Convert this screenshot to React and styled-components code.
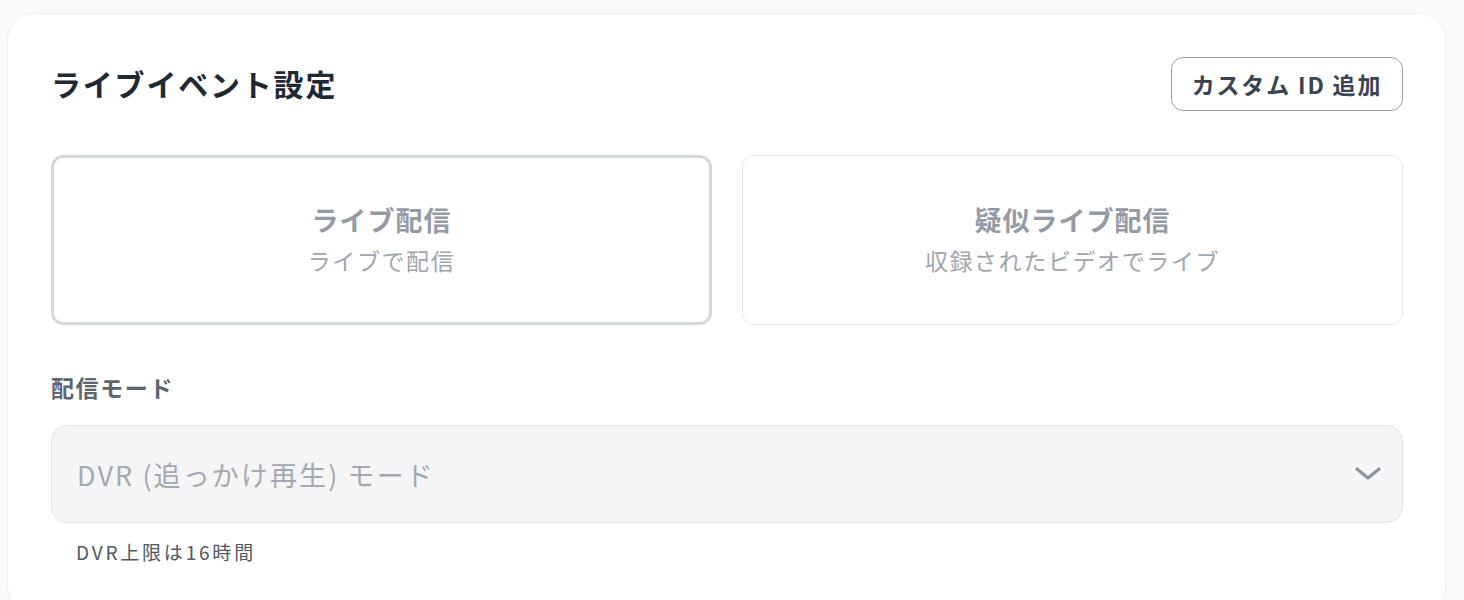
import { useState } from 'react';
import styled, { createGlobalStyle } from 'styled-components';

const GlobalStyle = createGlobalStyle`
  body {
    margin: 0;
    background: #fafafa;
    font-family: "Noto Sans CJK JP", "Noto Sans", sans-serif;
  }
`;

const modes = [
  { id: 'live', title: 'ライブ配信', sub: 'ライブで配信' },
  { id: 'pseudo', title: '疑似ライブ配信', sub: '収録されたビデオでライブ' },
];

export default function App() {
  const [selected, setSelected] = useState('live');
  return (
    <>
      <GlobalStyle />
      <Page>
        <Card>
          <Header>
            <Title>ライブイベント設定</Title>
            <OutlineButton type="button">カスタム ID 追加</OutlineButton>
          </Header>
          <ModeGrid>
            {modes.map((m) => (
              <ModeCard
                key={m.id}
                type="button"
                $active={selected === m.id}
                onClick={() => setSelected(m.id)}
              >
                <ModeTitle>{m.title}</ModeTitle>
                <ModeSub>{m.sub}</ModeSub>
              </ModeCard>
            ))}
          </ModeGrid>
          <Field>
            <Label>配信モード</Label>
            <SelectBox>
              <SelectText>DVR (追っかけ再生) モード</SelectText>
              <svg width="28" height="16" viewBox="0 0 28 16" fill="none">
                <path d="M3 3 L14 12 L25 3" stroke="#8a94a3" strokeWidth="3.2" strokeLinecap="round" strokeLinejoin="round" />
              </svg>
            </SelectBox>
            <Hint>DVR上限は16時間</Hint>
          </Field>
        </Card>
      </Page>
    </>
  );
}

const Page = styled.div`
  padding: 13px 18px 0 7px;
`;
const Card = styled.div`
  background: #fff;
  border: 1px solid #efefef;
  border-radius: 26px;
  padding: 43px 42px 30px 43px;
  min-height: 600px;
  box-sizing: border-box;
`;
const Header = styled.div`
  display: flex;
  justify-content: space-between;
  align-items: center;
  margin-bottom: 44px;
`;
const Title = styled.h2`
  margin: 0 0 2px;
  font-size: 30px;
  font-weight: 700;
  color: #1f2933;
  letter-spacing: 1.8px;
`;
const OutlineButton = styled.button`
  height: 54px;
  padding: 0;
  border: 1px solid #9ca1a8;
  border-radius: 12px;
  background: #fff;
  font-family: inherit;
  font-size: 23px;
  font-weight: 700;
  letter-spacing: 1.8px;
  color: #3a4350;
  width: 232px;
`;
const ModeGrid = styled.div`
  display: grid;
  grid-template-columns: 1fr 1fr;
  gap: 30px;
  margin-bottom: 44px;
`;
const ModeCard = styled.button`
  height: 170px;
  display: flex;
  flex-direction: column;
  align-items: center;
  justify-content: center;
  gap: 4px;
  padding-bottom: 4px;
  background: #fff;
  border-radius: 12px;
  font-family: inherit;
  box-sizing: border-box;
  border: ${(p) => (p.$active ? '3px solid #d3d8de' : '1px solid #e6e8eb')};
`;
const ModeTitle = styled.span`
  font-size: 27px;
  font-weight: 700;
  letter-spacing: 1px;
  color: #949ba5;
`;
const ModeSub = styled.span`
  font-size: 23px;
  letter-spacing: 1.6px;
  color: #a0a6ae;
`;
const Field = styled.div`
  display: flex;
  flex-direction: column;
`;
const Label = styled.label`
  font-size: 23px;
  font-weight: 700;
  letter-spacing: 1.6px;
  color: #5c6570;
  margin: 1px 0 21px;
`;
const SelectBox = styled.div`
  height: 98px;
  box-sizing: border-box;
  display: flex;
  align-items: center;
  justify-content: space-between;
  padding: 0 20px 0 25px;
  background: #f5f5f6;
  border: 1px solid #e2e4e8;
  border-radius: 16px;
`;
const SelectText = styled.span`
  font-size: 27px;
  letter-spacing: 2.1px;
  color: #a3a9b1;
`;
const Hint = styled.p`
  margin: 15px 0 0 25px;
  font-size: 19px;
  letter-spacing: 2.8px;
  color: #4f5864;
`;
